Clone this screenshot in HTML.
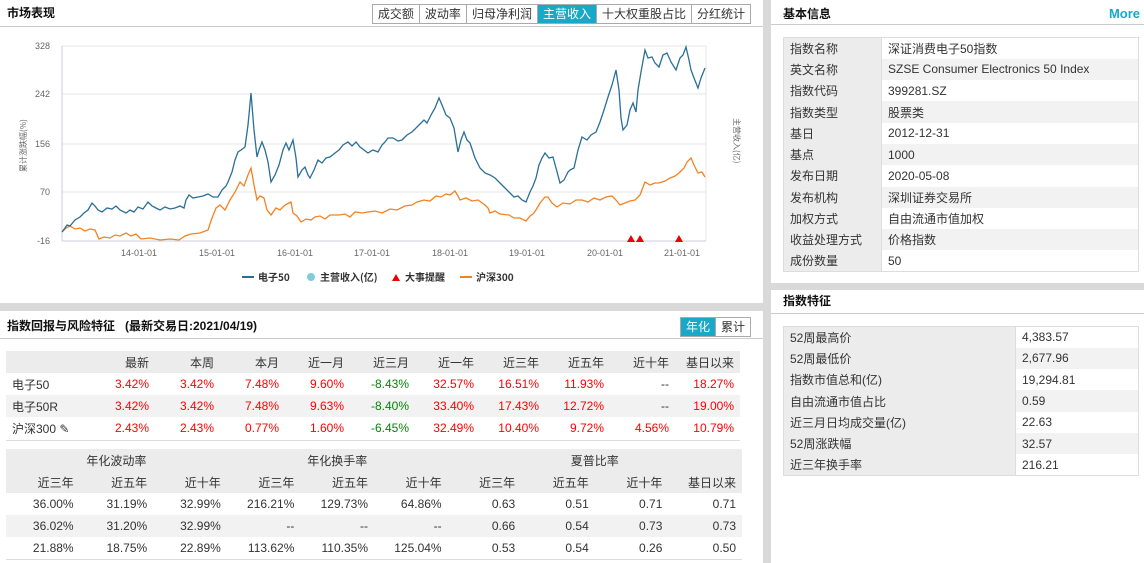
<!DOCTYPE html>
<html><head><meta charset="utf-8"><style>
*{margin:0;padding:0;box-sizing:border-box}
body{width:1144px;height:563px;background:#d9d9d9;font-family:"Liberation Sans","Noto Sans CJK SC",sans-serif;font-size:12px;color:#333;position:relative;overflow:hidden}
.p{position:absolute;background:#fff}
.hd{position:absolute;left:0;right:0;top:0;height:27px;border-bottom:1px solid #ccc;font-weight:bold;font-size:12px;line-height:27px;padding-left:7px;color:#111}
.tabs{position:absolute;top:4px;right:12px;display:flex;border:1px solid #aaa}
.tabs span{padding:0 5px;height:18px;line-height:18px;border-left:1px solid #aaa;font-size:12px;color:#333;font-weight:normal}
.tabs span:first-child{border-left:none}
.tabs .on{background:#1aa8c8;color:#fff}
table{border-collapse:collapse;position:absolute;table-layout:fixed}
td{height:21.3px;padding:0 6px;font-size:12px}
.red{color:#f00}.grn{color:#080}
</style></head><body>
<div class="p" style="left:0;top:0;width:763px;height:303px">
 <div class="hd">市场表现
  <div class="tabs"><span>成交额</span><span>波动率</span><span>归母净利润</span><span class="on">主营收入</span><span>十大权重股占比</span><span>分红统计</span></div>
 </div>
 <svg width="763" height="303" style="position:absolute;left:0;top:0" font-family="Liberation Sans" font-size="9" fill="#666">
  <g stroke="#e6e6e6" stroke-width="1">
   <line x1="62" y1="46" x2="706" y2="46"/><line x1="62" y1="94" x2="706" y2="94"/><line x1="62" y1="144" x2="706" y2="144"/><line x1="62" y1="192" x2="706" y2="192"/>
   <line x1="706" y1="46" x2="706" y2="241"/>
  </g>
  <line x1="62" y1="241" x2="706" y2="241" stroke="#ccd" />
  <line x1="62" y1="46" x2="62" y2="241" stroke="#ccd"/>
  <text x="50" y="49" text-anchor="end">328</text><text x="50" y="97" text-anchor="end">242</text><text x="50" y="147" text-anchor="end">156</text><text x="50" y="195" text-anchor="end">70</text><text x="50" y="244" text-anchor="end">-16</text>
  <g text-anchor="middle"><text x="139" y="256">14-01-01</text><text x="217" y="256">15-01-01</text><text x="295" y="256">16-01-01</text><text x="372" y="256">17-01-01</text><text x="450" y="256">18-01-01</text><text x="527" y="256">19-01-01</text><text x="605" y="256">20-01-01</text><text x="682" y="256">21-01-01</text></g>
  <text transform="translate(26,172) rotate(-90)" font-size="8" font-family="Noto Sans CJK SC">累计涨跌幅(%)</text>
  <text transform="translate(734,118) rotate(90)" font-size="8" font-family="Noto Sans CJK SC">主营收入(亿)</text>
  <polyline fill="none" stroke="#f58220" stroke-width="1.3" points="62,232 66,228 70,226 75,229 80,228 85,231 90,229 95,230 99,239 104,237 110,238 115,235 120,236 126,233 131,236 136,234 141,239 150,238 160,240 170,239 179,240 185,236 191,234 200,233 208,230 212,218 216,208 220,205 225,210 230,200 235,192 240,182 244,186 248,175 251,168 254,185 257,200 260,196 264,198 267,210 271,215 276,208 280,210 285,205 291,202 293,213 297,216 301,222 306,219 311,220 315,217 320,216 325,219 330,215 339,215 345,214 350,217 355,212 362,213 368,212 375,211 382,213 390,209 397,210 405,206 412,205 417,202 424,200 430,201 436,196 441,197 446,194 450,195 455,191 458,196 460,200 466,198 472,201 478,200 485,205 488,208 490,213 495,211 500,214 509,215 514,218 520,218 526,221 530,216 533,214 536,210 540,203 545,197 548,197 552,203 557,207 563,203 570,204 576,200 582,200 588,202 594,198 600,200 606,197 612,196 616,200 620,205 625,203 630,201 635,200 640,195 645,182 650,185 655,183 659,183 665,181 670,178 675,176 679,173 684,168 687,162 691,158 694,165 698,173 702,172 705,177"/>
  <polyline fill="none" stroke="#2a6f97" stroke-width="1.3" points="62,232 65,228 67,225 70,226 75,220 80,217 84,213 88,210 92,203 95,206 98,210 102,212 107,208 112,209 116,206 120,210 126,213 130,210 134,212 138,207 143,209 148,202 152,206 156,208 160,210 165,207 170,209 175,208 180,206 184,208 186,200 189,195 193,198 198,197 203,196 208,194 213,197 218,197 222,190 226,186 228,182 232,172 235,160 238,152 241,150 245,147 248,125 251,93 254,130 257,157 259,150 262,142 265,150 268,162 271,182 275,175 279,165 283,150 286,143 289,150 293,140 296,158 298,177 302,170 305,167 308,175 310,178 314,170 318,160 322,163 326,158 330,157 335,153 339,150 343,145 348,142 352,146 356,142 360,147 364,150 368,153 373,150 378,152 382,145 385,142 388,138 393,138 398,141 402,140 407,135 412,132 417,127 421,123 424,120 427,123 431,115 435,108 439,98 442,105 446,115 450,118 454,128 458,152 461,140 464,132 467,140 470,143 475,158 480,168 485,173 490,175 495,178 502,185 507,190 511,194 514,197 518,196 522,200 526,202 530,192 533,186 536,178 539,165 542,158 545,153 549,158 553,157 556,168 560,183 564,180 568,172 570,170 574,168 578,150 582,137 587,140 591,135 596,132 600,122 604,110 608,97 612,85 616,70 619,90 621,118 623,130 627,125 630,110 633,103 636,112 638,90 641,72 645,50 648,58 652,57 655,63 659,67 663,55 667,53 671,62 676,70 680,58 683,55 686,47 689,60 691,70 694,78 698,88 701,78 705,68"/>
  <g fill="#e00"><path d="M627,242 l4,-7 l4,7z"/><path d="M636,242 l4,-7 l4,7z"/><path d="M675,242 l4,-7 l4,7z"/></g>
  <g font-size="10" fill="#333" font-family="Noto Sans CJK SC" font-weight="bold">
   <line x1="242" y1="277" x2="254" y2="277" stroke="#2a6f97" stroke-width="2"/><text x="258" y="281">电子50</text>
   <circle cx="311" cy="277" r="4" fill="#7ccfd8"/><text x="320" y="281">主营收入(亿)</text>
   <path d="M392,281 l4,-7 l4,7z" fill="#e00"/><text x="405" y="281">大事提醒</text>
   <line x1="460" y1="277" x2="472" y2="277" stroke="#f58220" stroke-width="2"/><text x="476" y="281">沪深300</text>
  </g>
 </svg>
</div>
<div class="p" style="left:0;top:311px;width:763px;height:252px">
 <div class="hd" style="height:28px;line-height:30px">指数回报与风险特征 &nbsp;&nbsp;(最新交易日:2021/04/19)
  <div class="tabs" style="top:6px;right:12px"><span class="on">年化</span><span>累计</span></div>
 </div>
</div>
<table style="left:6px;top:351px;width:734px;border-bottom:1px solid #ddd">
 <colgroup><col style="width:84px"><col span="10" style="width:65px"></colgroup>
 <tr style="background:#ececec;text-align:right;height:22px"><td></td><td>最新</td><td>本周</td><td>本月</td><td>近一月</td><td>近三月</td><td>近一年</td><td>近三年</td><td>近五年</td><td>近十年</td><td>基日以来</td></tr>
 <tr style="text-align:right;height:22px"><td style="text-align:left">电子50</td><td class="red">3.42%</td><td class="red">3.42%</td><td class="red">7.48%</td><td class="red">9.60%</td><td class="grn">-8.43%</td><td class="red">32.57%</td><td class="red">16.51%</td><td class="red">11.93%</td><td>--</td><td class="red">18.27%</td></tr>
 <tr style="text-align:right;height:22px;background:#f2f2f2"><td style="text-align:left">电子50R</td><td class="red">3.42%</td><td class="red">3.42%</td><td class="red">7.48%</td><td class="red">9.63%</td><td class="grn">-8.40%</td><td class="red">33.40%</td><td class="red">17.43%</td><td class="red">12.72%</td><td>--</td><td class="red">19.00%</td></tr>
 <tr style="text-align:right;height:23px"><td style="text-align:left">沪深300 ✎</td><td class="red">2.43%</td><td class="red">2.43%</td><td class="red">0.77%</td><td class="red">1.60%</td><td class="grn">-6.45%</td><td class="red">32.49%</td><td class="red">10.40%</td><td class="red">9.72%</td><td class="red">4.56%</td><td class="red">10.79%</td></tr>
</table>
<table style="left:6px;top:449px;width:736px;border-bottom:1px solid #ddd;text-align:right">
 <colgroup><col span="10" style="width:73.6px"></colgroup>
 <tr style="background:#ececec;height:22px;text-align:center"><td colspan="3">年化波动率</td><td colspan="3">年化换手率</td><td colspan="4">夏普比率</td></tr>
 <tr style="background:#ececec;height:22px"><td>近三年</td><td>近五年</td><td>近十年</td><td>近三年</td><td>近五年</td><td>近十年</td><td>近三年</td><td>近五年</td><td>近十年</td><td>基日以来</td></tr>
 <tr style="height:22px"><td>36.00%</td><td>31.19%</td><td>32.99%</td><td>216.21%</td><td>129.73%</td><td>64.86%</td><td>0.63</td><td>0.51</td><td>0.71</td><td>0.71</td></tr>
 <tr style="height:22px;background:#f2f2f2"><td>36.02%</td><td>31.20%</td><td>32.99%</td><td>--</td><td>--</td><td>--</td><td>0.66</td><td>0.54</td><td>0.73</td><td>0.73</td></tr>
 <tr style="height:22px"><td>21.88%</td><td>18.75%</td><td>22.89%</td><td>113.62%</td><td>110.35%</td><td>125.04%</td><td>0.53</td><td>0.54</td><td>0.26</td><td>0.50</td></tr>
</table>
<div class="p" style="left:771px;top:0;width:373px;height:283px">
 <div class="hd" style="height:25px;line-height:28px;padding-left:12px">基本信息<span style="position:absolute;right:4px;color:#1aa8c8;font-size:13px">More</span></div>
</div>
<table style="left:783px;top:37px;width:356px;border:1px solid #ddd">
 <colgroup><col style="width:98px"><col></colgroup>
 <tr><td style="background:#ececec;border-right:1px solid #ddd">指数名称</td><td>深证消费电子50指数</td></tr>
 <tr style="background:#f2f2f2"><td style="background:#ececec;border-right:1px solid #ddd">英文名称</td><td>SZSE Consumer Electronics 50 Index</td></tr>
 <tr><td style="background:#ececec;border-right:1px solid #ddd">指数代码</td><td>399281.SZ</td></tr>
 <tr style="background:#f2f2f2"><td style="background:#ececec;border-right:1px solid #ddd">指数类型</td><td>股票类</td></tr>
 <tr><td style="background:#ececec;border-right:1px solid #ddd">基日</td><td>2012-12-31</td></tr>
 <tr style="background:#f2f2f2"><td style="background:#ececec;border-right:1px solid #ddd">基点</td><td>1000</td></tr>
 <tr><td style="background:#ececec;border-right:1px solid #ddd">发布日期</td><td>2020-05-08</td></tr>
 <tr style="background:#f2f2f2"><td style="background:#ececec;border-right:1px solid #ddd">发布机构</td><td>深圳证券交易所</td></tr>
 <tr><td style="background:#ececec;border-right:1px solid #ddd">加权方式</td><td>自由流通市值加权</td></tr>
 <tr style="background:#f2f2f2"><td style="background:#ececec;border-right:1px solid #ddd">收益处理方式</td><td>价格指数</td></tr>
 <tr><td style="background:#ececec;border-right:1px solid #ddd">成份数量</td><td>50</td></tr>
</table>
<div class="p" style="left:771px;top:290px;width:373px;height:273px">
 <div class="hd" style="height:24px;line-height:22px;padding-left:12px">指数特征</div>
</div>
<table style="left:783px;top:326px;width:356px;border:1px solid #ddd">
 <colgroup><col style="width:232px"><col></colgroup>
 <tr><td style="background:#ececec;border-right:1px solid #ddd">52周最高价</td><td>4,383.57</td></tr>
 <tr style="background:#f2f2f2"><td style="background:#ececec;border-right:1px solid #ddd">52周最低价</td><td>2,677.96</td></tr>
 <tr><td style="background:#ececec;border-right:1px solid #ddd">指数市值总和(亿)</td><td>19,294.81</td></tr>
 <tr style="background:#f2f2f2"><td style="background:#ececec;border-right:1px solid #ddd">自由流通市值占比</td><td>0.59</td></tr>
 <tr><td style="background:#ececec;border-right:1px solid #ddd">近三月日均成交量(亿)</td><td>22.63</td></tr>
 <tr style="background:#f2f2f2"><td style="background:#ececec;border-right:1px solid #ddd">52周涨跌幅</td><td>32.57</td></tr>
 <tr><td style="background:#ececec;border-right:1px solid #ddd">近三年换手率</td><td>216.21</td></tr>
</table>
</body></html>
